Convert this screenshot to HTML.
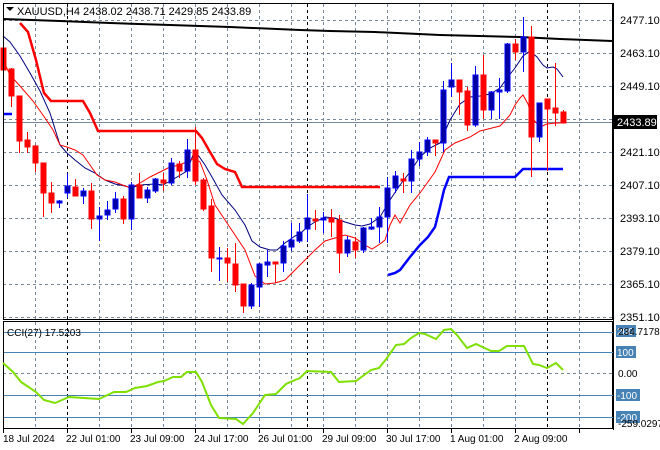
<!DOCTYPE html>
<html><head><meta charset="utf-8"><style>
html,body{margin:0;padding:0;background:#fff;}
svg{display:block;font-family:"Liberation Sans",sans-serif;}
</style></head><body>
<svg width="660" height="450" viewBox="0 0 660 450" xmlns="http://www.w3.org/2000/svg">
<rect width="660" height="450" fill="#fff"/>
<g stroke="#778899" stroke-width="1" stroke-dasharray="3,3" fill="none">
<path d="M3 20.5H613M3 53.5H613M3 86.5H613M3 119.5H613M3 152.5H613M3 185.5H613M3 218.5H613M3 251.5H613M3 284.5H613M3 317.5H613"/>
<path d="M35.5 4V320M99.5 4V320M131.5 4V320M163.5 4V320M195.5 4V320M227.5 4V320M259.5 4V320M291.5 4V320M323.5 4V320M355.5 4V320M387.5 4V320M419.5 4V320M451.5 4V320M483.5 4V320M515.5 4V320M579.5 4V320"/>
<path d="M35.5 322V428M99.5 322V428M131.5 322V428M163.5 322V428M195.5 322V428M227.5 322V428M259.5 322V428M291.5 322V428M323.5 322V428M355.5 322V428M387.5 322V428M419.5 322V428M451.5 322V428M483.5 322V428M515.5 322V428M579.5 322V428"/>
<path d="M3 373.5H613"/>
</g>
<g stroke="#000" stroke-width="1" stroke-dasharray="3,3">
<path d="M67.5 4V320M307.5 4V320M547.5 4V320M67.5 322V428M307.5 322V428M547.5 322V428"/>
</g>
<line x1="3" y1="122.5" x2="613" y2="122.5" stroke="#778899" stroke-width="1"/>
<polyline fill="none" stroke="#000" stroke-width="2" points="3,19 60,21 110,23 170,25 230,27 300,30 330,31 375,32 440,35 520,37 560,39 612,41"/>
<polyline fill="none" stroke="#f00" stroke-width="2.5" points="20,23 28,32 36,60 42,85 44,93 51,101 83,101 90,113 98,131 196,131 202,138 210,152 217,164 225,169 235,172 242,187 380,187"/>
<polyline fill="none" stroke="#00f" stroke-width="2.5" points="388,275 395,273 400,270 410,257 420,245 428,237 435,227 440,207 444,190 449,177 515,177 523,169 563,169"/>
<line x1="3" y1="114" x2="12" y2="114" stroke="#00f" stroke-width="2.5"/>
<polyline fill="none" stroke="#000080" stroke-width="1" points="3,36 10,42 20,56 30,73 40,91 50,113 60,145 67,153 75,160 85,168 95,173 105,180 115,184 125,186 131,188 140,185 155,184 163,185 172,180 187,171 193,155 198,155 205,165 212,177 222,195 235,210 245,225 252,241 260,247 270,250 277,250 285,243 295,236 300,234 307,227 315,222 325,217 335,218 345,222 355,225 362,226 370,224 380,217 390,200 400,185 410,172 420,157 430,148 440,143 450,120 460,104 470,97 480,96 490,94 500,88 507,78 515,68 523,56 530,51 537,57 543,65 547,68 553,67 557,69 563,77"/>
<polyline fill="none" stroke="#f00" stroke-width="1" points="3,60 10,75 20,86 33,101 45,118 53,130 60,145 67,147 75,150 83,155 90,165 97,175 105,180 115,182 125,186 131,188 140,183 150,177 160,172 170,167 180,165 190,160 195,158 200,162 207,180 215,205 225,220 235,235 245,250 255,276 265,284 275,283 285,280 295,270 305,260 315,250 325,241 335,238 345,235 355,238 365,245 372,249 380,244 385,240 390,225 395,215 400,223 410,205 420,193 435,172 445,150 455,143 470,137 480,131 500,126 510,115 515,105 520,98 523,95 528,104 532,118 540,127 547,124 556,123 563,123 563,112"/>
<g stroke-width="1">
<g stroke="#f00" fill="#f00">
<line x1="3.5" y1="37" x2="3.5" y2="80"/><rect x="1" y="48" width="5" height="22"/>
<line x1="11.5" y1="68" x2="11.5" y2="107"/><rect x="9" y="69" width="5" height="27"/>
<line x1="19.5" y1="96" x2="19.5" y2="153"/><rect x="17" y="96" width="5" height="45"/>
<line x1="27.5" y1="132" x2="27.5" y2="153"/><rect x="25" y="140" width="5" height="7"/>
<line x1="35.5" y1="145" x2="35.5" y2="172"/><rect x="33" y="146" width="5" height="17"/>
<line x1="43.5" y1="163" x2="43.5" y2="217"/><rect x="41" y="163" width="5" height="30"/>
<line x1="51.5" y1="182" x2="51.5" y2="213"/><rect x="49" y="193" width="5" height="10"/>
<line x1="75.5" y1="179" x2="75.5" y2="196"/><rect x="73" y="187" width="5" height="9"/>
<line x1="91.5" y1="183" x2="91.5" y2="229"/><rect x="89" y="191" width="5" height="28"/>
<line x1="123.5" y1="196" x2="123.5" y2="224"/><rect x="121" y="199" width="5" height="20"/>
<line x1="139.5" y1="173" x2="139.5" y2="198"/><rect x="137" y="185" width="5" height="13"/>
<line x1="163.5" y1="173" x2="163.5" y2="191"/><rect x="161" y="180" width="5" height="3"/>
<line x1="179.5" y1="161" x2="179.5" y2="178"/><rect x="177" y="164" width="5" height="7"/>
<line x1="195.5" y1="127" x2="195.5" y2="185"/><rect x="193" y="150" width="5" height="31"/>
<line x1="203.5" y1="178" x2="203.5" y2="211"/><rect x="201" y="180" width="5" height="29"/>
<line x1="211.5" y1="199" x2="211.5" y2="272"/><rect x="209" y="206" width="5" height="52"/>
<line x1="227.5" y1="248" x2="227.5" y2="282"/><rect x="225" y="258" width="5" height="5"/>
<line x1="235.5" y1="243" x2="235.5" y2="292"/><rect x="233" y="264" width="5" height="21"/>
<line x1="243.5" y1="284" x2="243.5" y2="313"/><rect x="241" y="284" width="5" height="22"/>
<line x1="275.5" y1="262" x2="275.5" y2="283"/><rect x="273" y="262" width="5" height="2"/>
<line x1="315.5" y1="210" x2="315.5" y2="230"/><rect x="313" y="219" width="5" height="2"/>
<line x1="331.5" y1="209" x2="331.5" y2="237"/><rect x="329" y="218" width="5" height="4"/>
<line x1="339.5" y1="215" x2="339.5" y2="273"/><rect x="337" y="220" width="5" height="33"/>
<line x1="355.5" y1="237" x2="355.5" y2="258"/><rect x="353" y="242" width="5" height="8"/>
<line x1="403.5" y1="173" x2="403.5" y2="193"/><rect x="401" y="179" width="5" height="2"/>
<line x1="435.5" y1="140" x2="435.5" y2="156"/><rect x="433" y="140" width="5" height="3"/>
<line x1="459.5" y1="80" x2="459.5" y2="115"/><rect x="457" y="80" width="5" height="12"/>
<line x1="467.5" y1="87" x2="467.5" y2="131"/><rect x="465" y="91" width="5" height="34"/>
<line x1="483.5" y1="55" x2="483.5" y2="119"/><rect x="481" y="75" width="5" height="35"/>
<line x1="515.5" y1="39" x2="515.5" y2="60"/><rect x="513" y="44" width="5" height="8"/>
<line x1="531.5" y1="26" x2="531.5" y2="177"/><rect x="529" y="37" width="5" height="100"/>
<line x1="547.5" y1="99" x2="547.5" y2="171"/><rect x="545" y="99" width="5" height="10"/>
<line x1="555.5" y1="63" x2="555.5" y2="126"/><rect x="553" y="108" width="5" height="5"/>
<line x1="563.5" y1="110" x2="563.5" y2="123"/><rect x="561" y="112" width="5" height="11"/>
</g>
<g stroke="#0000ff">
<line x1="59.5" y1="200" x2="59.5" y2="208"/><line x1="67.5" y1="173" x2="67.5" y2="198"/>
<line x1="83.5" y1="188" x2="83.5" y2="204"/><line x1="99.5" y1="207" x2="99.5" y2="241"/>
<line x1="107.5" y1="201" x2="107.5" y2="220"/><line x1="115.5" y1="192" x2="115.5" y2="213"/>
<line x1="131.5" y1="182" x2="131.5" y2="230"/><line x1="147.5" y1="187" x2="147.5" y2="203"/>
<line x1="155.5" y1="178" x2="155.5" y2="193"/><line x1="171.5" y1="158" x2="171.5" y2="185"/>
<line x1="187.5" y1="139" x2="187.5" y2="178"/><line x1="219.5" y1="247" x2="219.5" y2="281"/>
<line x1="251.5" y1="283" x2="251.5" y2="309"/><line x1="259.5" y1="263" x2="259.5" y2="307"/>
<line x1="267.5" y1="250" x2="267.5" y2="277"/><line x1="283.5" y1="241" x2="283.5" y2="272"/>
<line x1="291.5" y1="223" x2="291.5" y2="251"/><line x1="299.5" y1="223" x2="299.5" y2="243"/>
<line x1="307.5" y1="194" x2="307.5" y2="242"/><line x1="323.5" y1="212" x2="323.5" y2="233"/>
<line x1="347.5" y1="236" x2="347.5" y2="257"/><line x1="363.5" y1="227" x2="363.5" y2="253"/>
<line x1="371.5" y1="218" x2="371.5" y2="230"/><line x1="379.5" y1="207" x2="379.5" y2="243"/>
<line x1="387.5" y1="177" x2="387.5" y2="243"/><line x1="395.5" y1="171" x2="395.5" y2="193"/>
<line x1="411.5" y1="150" x2="411.5" y2="193"/><line x1="419.5" y1="142" x2="419.5" y2="166"/>
<line x1="427.5" y1="137" x2="427.5" y2="156"/><line x1="443.5" y1="81" x2="443.5" y2="152"/>
<line x1="451.5" y1="63" x2="451.5" y2="97"/><line x1="475.5" y1="66" x2="475.5" y2="127"/>
<line x1="491.5" y1="91" x2="491.5" y2="119"/><line x1="499.5" y1="78" x2="499.5" y2="119"/>
<line x1="507.5" y1="43" x2="507.5" y2="93"/><line x1="523.5" y1="17" x2="523.5" y2="72"/>
<line x1="539.5" y1="103" x2="539.5" y2="142"/>
</g>
<g fill="#0000a0" stroke="#0000ff">
<rect x="57" y="201" width="5" height="2"/><rect x="65" y="186" width="5" height="7"/>
<rect x="81" y="191" width="5" height="5"/><rect x="97" y="216" width="5" height="3"/>
<rect x="105" y="210" width="5" height="5"/><rect x="113" y="199" width="5" height="10"/>
<rect x="129" y="185" width="5" height="34"/><rect x="145" y="190" width="5" height="8"/>
<rect x="153" y="179" width="5" height="12"/><rect x="169" y="163" width="5" height="20"/>
<rect x="185" y="150" width="5" height="21"/><rect x="217" y="258" width="5" height="1"/>
<rect x="249" y="285" width="5" height="21"/><rect x="257" y="264" width="5" height="23"/>
<rect x="265" y="262" width="5" height="3"/><rect x="281" y="246" width="5" height="17"/>
<rect x="289" y="240" width="5" height="7"/><rect x="297" y="232" width="5" height="9"/>
<rect x="305" y="218" width="5" height="11"/><rect x="321" y="218" width="5" height="2"/>
<rect x="345" y="240" width="5" height="13"/><rect x="361" y="228" width="5" height="22"/>
<rect x="369" y="227" width="5" height="2"/><rect x="377" y="217" width="5" height="10"/>
<rect x="385" y="188" width="5" height="29"/><rect x="393" y="176" width="5" height="12"/>
<rect x="409" y="159" width="5" height="22"/><rect x="417" y="152" width="5" height="7"/>
<rect x="425" y="140" width="5" height="12"/><rect x="441" y="90" width="5" height="53"/>
<rect x="449" y="80" width="5" height="7"/><rect x="473" y="75" width="5" height="50"/>
<rect x="489" y="92" width="5" height="18"/><rect x="497" y="90" width="5" height="2"/>
<rect x="505" y="44" width="5" height="47"/><rect x="521" y="37" width="5" height="15"/>
<rect x="537" y="103" width="5" height="34"/>
</g>
</g>
<rect x="3.5" y="3.5" width="609" height="316" fill="none" stroke="#000" stroke-width="1"/>
<rect x="3.5" y="321.5" width="609" height="107" fill="none" stroke="#000" stroke-width="1"/>
<line x1="613.5" y1="3" x2="613.5" y2="430" stroke="#000"/>
<path d="M6 7 L14 7 L10 11 Z" fill="#000"/>
<text x="17" y="15" font-size="11" fill="#000">XAUUSD,H4  2438.02 2438.71 2429.85 2433.89</text>
<g font-size="11" fill="#000">
<text x="620" y="24">2477.10</text><text x="620" y="57">2463.10</text><text x="620" y="90">2449.10</text>
<text x="620" y="156">2421.10</text><text x="620" y="189">2407.10</text><text x="620" y="222">2393.10</text>
<text x="620" y="255">2379.10</text><text x="620" y="288">2365.10</text><text x="620" y="321">2351.10</text>
</g>
<rect x="614" y="115" width="43" height="14" fill="#000"/>
<text x="617" y="126" font-size="11" fill="#fff">2433.89</text>
<g stroke="#4682b4" stroke-width="1">
<path d="M4 332.5H613M4 352.5H613M4 395.5H613M4 417.5H613"/>
</g>
<polyline fill="none" stroke="#7fe000" stroke-width="2" points="3,363 13,372 21,382 36,392 44,400 55,403 69,397 84,398 99,399 114,392 126,392 135,388 147,386 158,382 164,381 173,377 181,377 187,372 196,372 202,382 211,405 219,418 236,419 243,424 253,413 265,395 276,394 286,384 295,380 300,378 307,371 331,372 339,382 356,381 371,370 379,368 387,358 396,345 404,344 411,338 419,333 425,334 436,339 444,330 451,329 457,335 467,348 476,344 491,351 499,351 507,346 524,346 533,364 539,365 547,368 556,363 563,370"/>
<text x="7" y="336" font-size="10" fill="#000">CCI(27) 17.5203</text>
<g font-size="10">
<rect x="616" y="325" width="20" height="12" fill="#4682b4"/><text x="617" y="335" fill="#fff">200</text>
<text x="618" y="335" fill="#000">234.7178</text>
<rect x="616" y="346" width="20" height="12" fill="#4682b4"/><text x="617" y="356" fill="#fff">100</text>
<text x="618" y="377" fill="#000">0.00</text>
<rect x="616" y="389" width="24" height="12" fill="#4682b4"/><text x="617" y="399" fill="#fff">-100</text>
<rect x="616" y="411" width="24" height="12" fill="#4682b4"/><text x="617" y="421" fill="#fff">-200</text>
<text x="618" y="427" fill="#000">-259.0297</text>
</g>
<g font-size="10" fill="#000">
<text x="3" y="442">18 Jul 2024</text><text x="66" y="442">22 Jul 01:00</text><text x="130" y="442">23 Jul 09:00</text>
<text x="194" y="442">24 Jul 17:00</text><text x="258" y="442">26 Jul 01:00</text><text x="322" y="442">29 Jul 09:00</text>
<text x="386" y="442">30 Jul 17:00</text><text x="450" y="442">1 Aug 01:00</text><text x="514" y="442">2 Aug 09:00</text>
</g>
<g stroke="#000"><path d="M3.5 429V433M67.5 429V433M131.5 429V433M195.5 429V433M259.5 429V433M323.5 429V433M387.5 429V433M451.5 429V433M515.5 429V433M579.5 429V433"/></g>
</svg>
</body></html>
